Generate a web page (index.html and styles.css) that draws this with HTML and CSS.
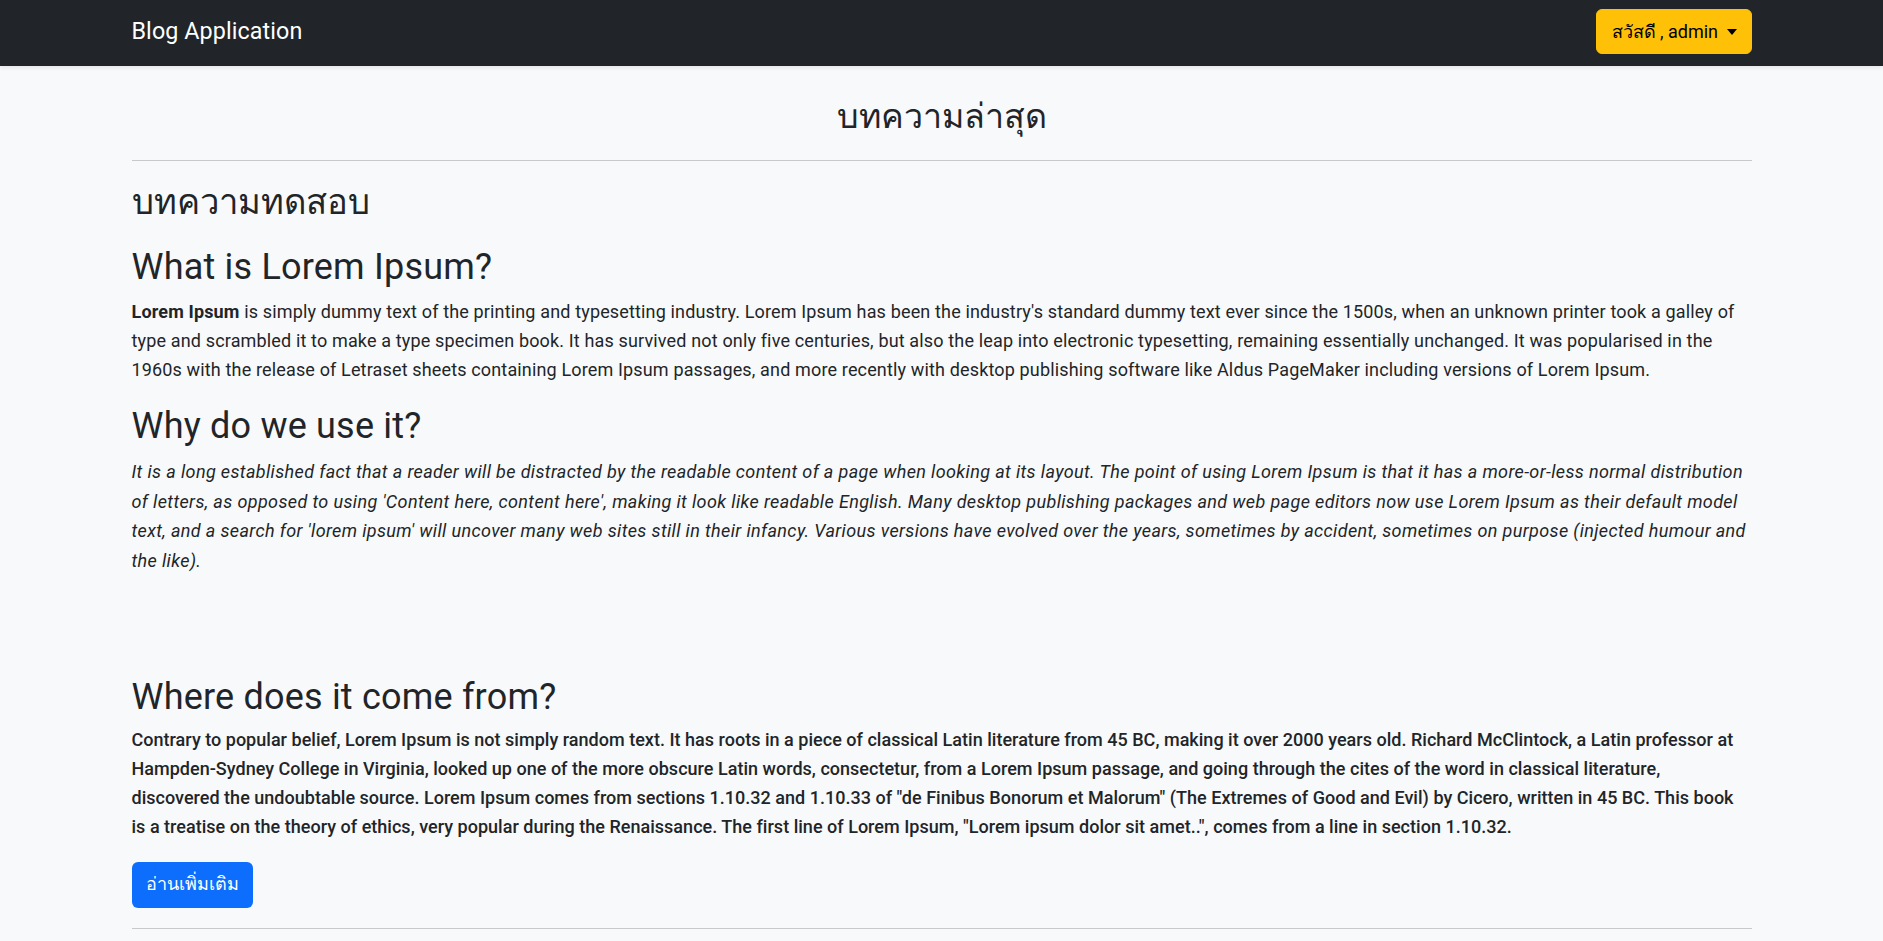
FILE: index.html
```html
<!DOCTYPE html>
<html lang="th">
<head>
<meta charset="utf-8">
<title>Blog Application</title>
<link rel="stylesheet" href="styles.css">
</head>
<body>
<nav class="navbar">
  <div class="container nav-inner">
    <a class="brand" href="#">Blog Application</a>
    <button class="user-btn" type="button"><span class="user-label">สวัสดี , admin</span><span class="caret"></span></button>
  </div>
</nav>
<main class="container">
  <h2 class="page-title">บทความล่าสุด</h2>
  <hr class="divider">
  <article class="post">
    <h2 class="post-title">บทความทดสอบ</h2>
    <h2 class="sec">What is Lorem Ipsum?</h2>
    <p class="para"><strong>Lorem Ipsum</strong> is simply dummy text of the printing and typesetting industry. Lorem Ipsum has been the industry's standard dummy text ever since the 1500s, when an unknown printer took a galley of type and scrambled it to make a type specimen book. It has survived not only five centuries, but also the leap into electronic typesetting, remaining essentially unchanged. It was popularised in the 1960s with the release of Letraset sheets containing Lorem Ipsum passages, and more recently with desktop publishing software like Aldus PageMaker including versions of Lorem Ipsum.</p>
    <h2 class="sec sec-2">Why do we use it?</h2>
    <p class="para para-it">It is a long established fact that a reader will be distracted by the readable content of a page when looking at its layout. The point of using Lorem Ipsum is that it has a more-or-less normal distribution of letters, as opposed to using 'Content here, content here', making it look like readable English. Many desktop publishing packages and web page editors now use Lorem Ipsum as their default model text, and a search for 'lorem ipsum' will uncover many web sites still in their infancy. Various versions have evolved over the years, sometimes by accident, sometimes on purpose (injected humour and the like).</p>
    <h2 class="sec sec-3">Where does it come from?</h2>
    <p class="para para-md">Contrary to popular belief, Lorem Ipsum is not simply random text. It has roots in a piece of classical Latin literature from 45 BC, making it over 2000 years old. Richard McClintock, a Latin professor at Hampden-Sydney College in Virginia, looked up one of the more obscure Latin words, consectetur, from a Lorem Ipsum passage, and going through the cites of the word in classical literature, discovered the undoubtable source. Lorem Ipsum comes from sections 1.10.32 and 1.10.33 of "de Finibus Bonorum et Malorum" (The Extremes of Good and Evil) by Cicero, written in 45 BC. This book is a treatise on the theory of ethics, very popular during the Renaissance. The first line of Lorem Ipsum, "Lorem ipsum dolor sit amet..", comes from a line in section 1.10.32.</p>
    <a class="read-more" href="#">อ่านเพิ่มเติม</a>
  </article>
  <hr class="divider divider-end">
</main>
</body>
</html>
```
FILE: styles.css
```css
* { box-sizing: border-box; }
html, body { margin: 0; padding: 0; }
body {
  background: #f8f9fa;
  color: #212529;
  font-family: Roboto, "Noto Sans", sans-serif;
  font-size: 18px;
  line-height: 1.6;
}
.container {
  width: 1620px;
  margin: 0 auto;
}
.navbar {
  background: #212529;
  height: 66px;
  box-shadow: 0 2px 4px rgba(0, 0, 0, 0.08);
}
.nav-inner {
  height: 100%;
  display: flex;
  align-items: center;
  justify-content: space-between;
  padding-bottom: 3px;
}
.brand {
  color: #fff;
  text-decoration: none;
  font-size: 23.3px;
  line-height: 1;
  letter-spacing: 0.1px;
}
.user-btn {
  background: #ffc107;
  border: 1px solid #ffc107;
  border-radius: 6px;
  color: #000;
  font-family: Roboto, "Noto Sans", sans-serif;
  font-size: 18px;
  height: 45px;
  width: 156px;
  padding: 0 0 0 15px;
  display: flex;
  align-items: center;
  white-space: nowrap;
  cursor: pointer;
}
.user-label { line-height: 1; }
.caret {
  display: inline-block;
  width: 0;
  height: 0;
  border-top: 6px solid #000;
  border-left: 5.5px solid transparent;
  border-right: 5.5px solid transparent;
  margin-left: 9px;
}
h2 { margin: 0; font-weight: 400; line-height: 1.2; }
.page-title {
  text-align: center;
  font-size: 34px;
  margin-top: 30px;
  margin-bottom: 23px;
}
.divider {
  border: 0;
  border-top: 1px solid #c8c9cb;
  margin: 0;
}
.post-title {
  font-size: 34.6px;
  margin-top: 21.3px;
}
.sec {
  font-size: 36px;
  letter-spacing: 0.2px;
  margin-top: 22px;
}
.sec-2 { margin-top: 20.2px; }
.sec-3 { margin-top: 100.2px; }
.para {
  margin: 9.3px 0 0;
  line-height: 28.8px;
  letter-spacing: 0.15px;
}
.para strong { font-weight: 700; }
.para-it {
  font-style: italic;
  letter-spacing: 0.37px;
  line-height: 29.6px;
  margin-top: 9.3px;
}
.para-md {
  font-weight: 500;
  letter-spacing: 0.02px;
  margin-top: 7.6px;
}
.read-more {
  display: inline-flex;
  align-items: center;
  justify-content: center;
  margin-top: 20px;
  width: 121px;
  height: 46px;
  background: #0d6efd;
  color: #fff;
  text-decoration: none;
  border-radius: 6px;
  font-size: 18px;
}
.divider-end { margin-top: 20px; }
```
